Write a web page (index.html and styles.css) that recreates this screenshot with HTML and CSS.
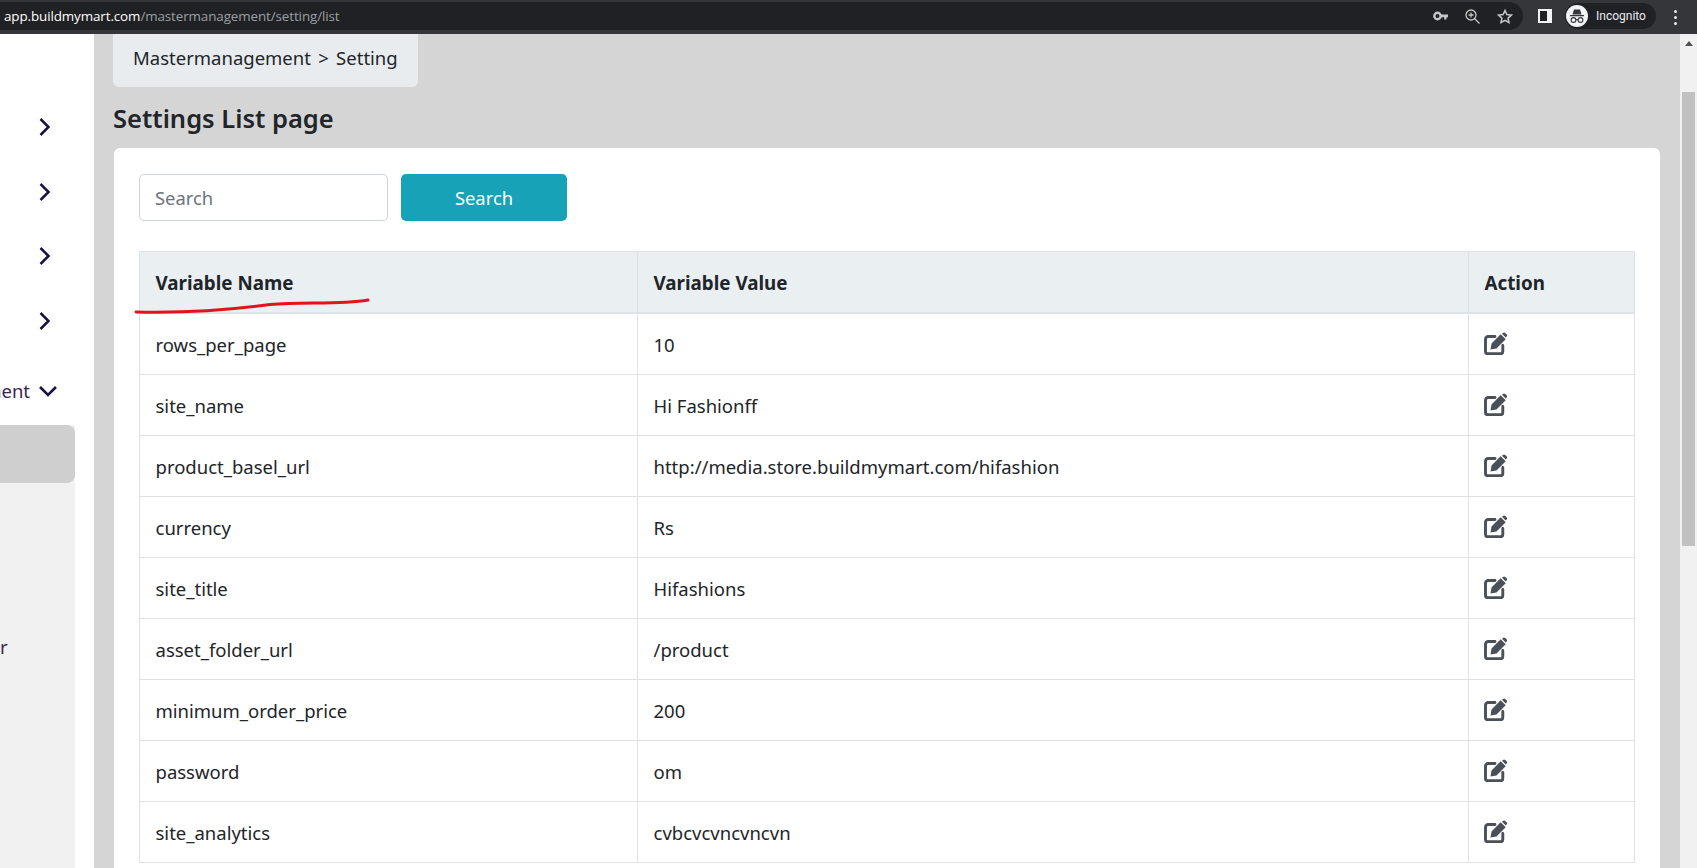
FILE: index.html
```html
<!DOCTYPE html>
<html lang="en">
<head>
<meta charset="utf-8">
<title>Settings List page</title>
<link rel="stylesheet" href="styles.css">
</head>
<body>
<svg class="defs" width="0" height="0" aria-hidden="true">
  <symbol id="edit" viewBox="0 0 23 23">
    <path d="M11 4.500H4.200A2.700 2.700 0 0 0 1.500 7.200v12.400a2.100 2.100 0 0 0 2.100 2.100h13a2.200 2.200 0 0 0 2.200-2.200V13.500" fill="none" stroke="currentColor" stroke-width="2.900" stroke-linecap="round"/>
    <path d="M6.500 17.500l1-6 9.200-9.200 5 5-9.200 9.200zM18 1.800l1-.9a1.600 1.600 0 0 1 2.200 0l1.400 1.400a1.600 1.600 0 0 1 0 2.200l-.9 1z" fill="currentColor"/>
  </symbol>
  <symbol id="chev" viewBox="0 0 12 20">
    <path d="M2 2l8 8-8 8" fill="none" stroke="currentColor" stroke-width="2.500"/>
  </symbol>
</svg>

<header class="chrome">
  <div class="omnibox">
    <div class="url"><span class="host">app.buildmymart.com</span>/mastermanagement/setting/list</div>
    <div class="omni-icons">
      <svg class="ic-key" width="15" height="10" viewBox="0 0 15 10"><circle cx="4.500" cy="5" r="3.200" fill="none" stroke="#c4c7c5" stroke-width="2.400"/><path d="M7 3.500h8v2.700h-1.500v2.300h-2.300v-2.300H7z" fill="#c4c7c5"/></svg>
      <svg width="15" height="15" viewBox="0 0 15 15" fill="none" stroke="#c4c7c5" stroke-width="1.300"><circle cx="6" cy="6" r="5"/><path d="M9.700 9.700l4.800 4.800M6 3.500v5M3.500 6h5"/></svg>
      <svg width="16" height="15" viewBox="0 0 16 15" fill="none" stroke="#c4c7c5" stroke-width="1.500"><path d="M8 1.500l1.900 4.100 4.500.5-3.300 3 .9 4.400L8 11.300l-4 2.200.9-4.400-3.300-3 4.500-.5z"/></svg>
    </div>
  </div>
  <div class="panel-icon"><span></span></div>
  <div class="profile">
    <svg class="avatar" width="22" height="22" viewBox="0 0 22 22"><circle cx="11" cy="11" r="11" fill="#f1f3f4"/><path d="M6.500 9.500l1.500-5h6l1.500 5zM4 10h14v1.200H4z" fill="#35363a"/><g fill="none" stroke="#35363a" stroke-width="1.100"><circle cx="7.500" cy="15" r="2.400"/><circle cx="14.500" cy="15" r="2.400"/><path d="M9.900 14.700h2.200"/></g></svg>
    <span class="profile-name">Incognito</span>
  </div>
  <div class="dots"><i></i><i></i><i></i></div>
</header>

<div class="viewport">
  <nav class="sidebar">
    <div class="nav-item"><svg class="chev"><use href="#chev"/></svg></div>
    <div class="nav-item"><svg class="chev"><use href="#chev"/></svg></div>
    <div class="nav-item"><svg class="chev"><use href="#chev"/></svg></div>
    <div class="nav-item"><svg class="chev"><use href="#chev"/></svg></div>
    <div class="nav-open"><span class="nav-label">Mastermanagement</span><svg class="chev-down" viewBox="0 0 20 12"><path d="M2 2l8 8 8-8" fill="none" stroke="currentColor" stroke-width="2.600"/></svg></div>
    <div class="submenu">
      <div class="sub-active"></div>
      <div class="sub-item">r</div>
    </div>
  </nav>

  <main class="main">
    <div class="breadcrumb">Mastermanagement &gt; Setting</div>
    <h1 class="title">Settings List page</h1>
    <section class="card">
      <form class="search">
        <input class="search-input" type="text" placeholder="Search">
        <button class="search-btn" type="button">Search</button>
      </form>
      <div class="table-wrap">
        <table class="table">
          <thead>
            <tr><th class="c1">Variable Name</th><th class="c2">Variable Value</th><th>Action</th></tr>
          </thead>
          <tbody>
            <tr><td>rows_per_page</td><td>10</td><td><svg class="edit"><use href="#edit"/></svg></td></tr>
            <tr><td>site_name</td><td>Hi Fashionff</td><td><svg class="edit"><use href="#edit"/></svg></td></tr>
            <tr><td>product_basel_url</td><td>http://media.store.buildmymart.com/hifashion</td><td><svg class="edit"><use href="#edit"/></svg></td></tr>
            <tr><td>currency</td><td>Rs</td><td><svg class="edit"><use href="#edit"/></svg></td></tr>
            <tr><td>site_title</td><td>Hifashions</td><td><svg class="edit"><use href="#edit"/></svg></td></tr>
            <tr><td>asset_folder_url</td><td>/product</td><td><svg class="edit"><use href="#edit"/></svg></td></tr>
            <tr><td>minimum_order_price</td><td>200</td><td><svg class="edit"><use href="#edit"/></svg></td></tr>
            <tr><td>password</td><td>om</td><td><svg class="edit"><use href="#edit"/></svg></td></tr>
            <tr><td>site_analytics</td><td>cvbcvcvncvncvn</td><td><svg class="edit"><use href="#edit"/></svg></td></tr>
          </tbody>
        </table>
        <svg class="scribble" width="240" height="18" viewBox="0 0 240 18"><path d="M2 15C50 16 90 14 136 7.500 170 4.500 205 8 234 3" fill="none" stroke="#e2131c" stroke-width="3" stroke-linecap="round"/></svg>
      </div>
    </section>
  </main>

  <aside class="scrollbar">
    <div class="arrow"></div>
    <div class="thumb"></div>
  </aside>
</div>
</body>
</html>
```

FILE: styles.css
```css
* { box-sizing: border-box; }
html, body { margin: 0; height: 100%; }
body {
  width: 1697px;
  height: 868px;
  overflow: hidden;
  display: flex;
  flex-direction: column;
  font-family: "Noto Sans", "Open Sans", sans-serif;
  color: #212529;
  background: #fff;
}
.defs { display: block; height: 0; }

/* browser chrome */
.chrome {
  flex: 0 0 34px;
  display: flex;
  align-items: flex-start;
  padding-top: 2px;
  background: #35363a;
}
.omnibox {
  width: 1523px;
  height: 28px;
  display: flex;
  align-items: center;
  justify-content: space-between;
  padding: 0 10px 0 4px;
  background: #202124;
  border-radius: 0 14px 14px 0;
}
.url {
  font-size: 13.400px;
  letter-spacing: -0.1px;
  color: #9aa0a6;
  font-family: "Open Sans", sans-serif;
}
.host { color: #fff; }
.omni-icons { display: flex; align-items: center; gap: 17px; }
.panel-icon {
  width: 14px;
  height: 14px;
  margin: 7px 0 0 15px;
  padding: 2px 5px 2px 2px;
  background: #f1f3f4;
}
.panel-icon span { display: block; height: 100%; background: #202124; }
.profile {
  width: 91px;
  height: 26px;
  margin: 1px 0 0 13px;
  display: flex;
  align-items: center;
  gap: 8px;
  padding-left: 1px;
  background: #202124;
  border-radius: 13px;
}
.profile-name { font-family: Roboto, sans-serif; font-size: 12px; color: #e8eaed; }
.dots {
  display: flex;
  flex-direction: column;
  gap: 3px;
  margin: 8px 0 0 18px;
}
.dots i { width: 3px; height: 3px; border-radius: 50%; background: #e8eaed; }

/* page */
.viewport { flex: 1; min-height: 0; display: flex; }
.sidebar {
  flex: 0 0 94px;
  width: 94px;
  min-width: 0;
  overflow: hidden;
  display: flex;
  flex-direction: column;
  padding-top: 61px;
  background: #fff;
  color: #1a1140;
}
.nav-item {
  height: 64.500px;
  flex: none;
  display: flex;
  align-items: center;
  justify-content: flex-end;
  padding-right: 43px;
}
.chev { width: 13px; height: 20px; }
.nav-open {
  flex: none;
  height: 72px;
  display: flex;
  align-items: center;
  justify-content: flex-end;
  gap: 8px;
  padding: 3px 36px 0 0;
  white-space: nowrap;
  font-size: 18.500px;
  color: #3b2650;
}
.chev-down { flex: none; width: 20px; height: 12px; color: #1a1140; }
.nav-label { flex: none; }
.submenu {
  flex: 1;
  width: 75px;
  background: #f2f1f2;
}
.sub-active {
  height: 58px;
  background: #d0cfd0;
  border-radius: 0 8px 8px 0;
}
.sub-item {
  margin-top: 150px;
  height: 28px;
  line-height: 28px;
  font-size: 18.500px;
  color: #3b2650;
}

.main {
  flex: 1;
  min-width: 0;
  padding: 0 20px 0 19px;
  background: #d5d5d5;
  display: flex;
  flex-direction: column;
}
.breadcrumb {
  flex: none;
  width: 305px;
  height: 53px;
  padding: 10px 0 0 20px;
  font-size: 18.500px;
  word-spacing: 2.500px;
  line-height: 28px;
  background: #e9ecef;
  border-radius: 0 0 6px 6px;
}
.title {
  flex: none;
  margin: 13px 0 0;
  height: 48px;
  font-size: 25.500px;
  line-height: 36px;
  font-weight: 600;
}
.card {
  flex: 1;
  margin-left: 1px;
  padding: 26px 25px 0;
  background: #fff;
  border-radius: 6px 6px 0 0;
}
.search { display: flex; gap: 13px; }
.search-input {
  width: 249px;
  height: 47px;
  padding: 0 15px;
  font: inherit;
  font-size: 18.400px;
  color: #6c757d;
  border: 1px solid #ced4da;
  border-radius: 5px;
  background: #fff;
}
.search-input::placeholder { color: #6c757d; opacity: 1; }
.search-btn {
  width: 166px;
  height: 47px;
  font: inherit;
  font-size: 18.400px;
  color: #fff;
  background: #17a2b8;
  border: 0;
  border-radius: 5px;
}
.table-wrap { position: relative; margin-top: 30px; }
.table {
  width: 1496px;
  border-collapse: collapse;
  table-layout: fixed;
  font-size: 18.500px;
}
.c1 { width: 498px; }
.c2 { width: 831px; }
.table th, .table td {
  height: 61px;
  padding: 0 15.500px;
  text-align: left;
  border: 1px solid #dee2e6;
  vertical-align: middle;
}
.table thead th {
  height: 61px;
  padding-top: 2px;
  background: #eaeff2;
  border-bottom-width: 2px;
  font-size: 18.800px;
  font-weight: 700;
}
.table tbody tr:first-child td { height: 62px; padding-top: 2px; }
.edit { display: block; width: 23px; height: 23px; color: #495057; margin: -2px 0 0 -1px; }
.scribble { position: absolute; left: -5px; top: 46px; }

.scrollbar {
  flex: 0 0 17px;
  background: #f1f1f1;
  padding: 7px 2px 0;
  display: flex;
  flex-direction: column;
  align-items: center;
}
.arrow {
  width: 0;
  height: 0;
  border: 4px solid transparent;
  border-top: 0;
  border-bottom: 5px solid #505050;
}
.thumb {
  margin-top: 46px;
  width: 13px;
  height: 454px;
  background: #c1c1c1;
}
```
